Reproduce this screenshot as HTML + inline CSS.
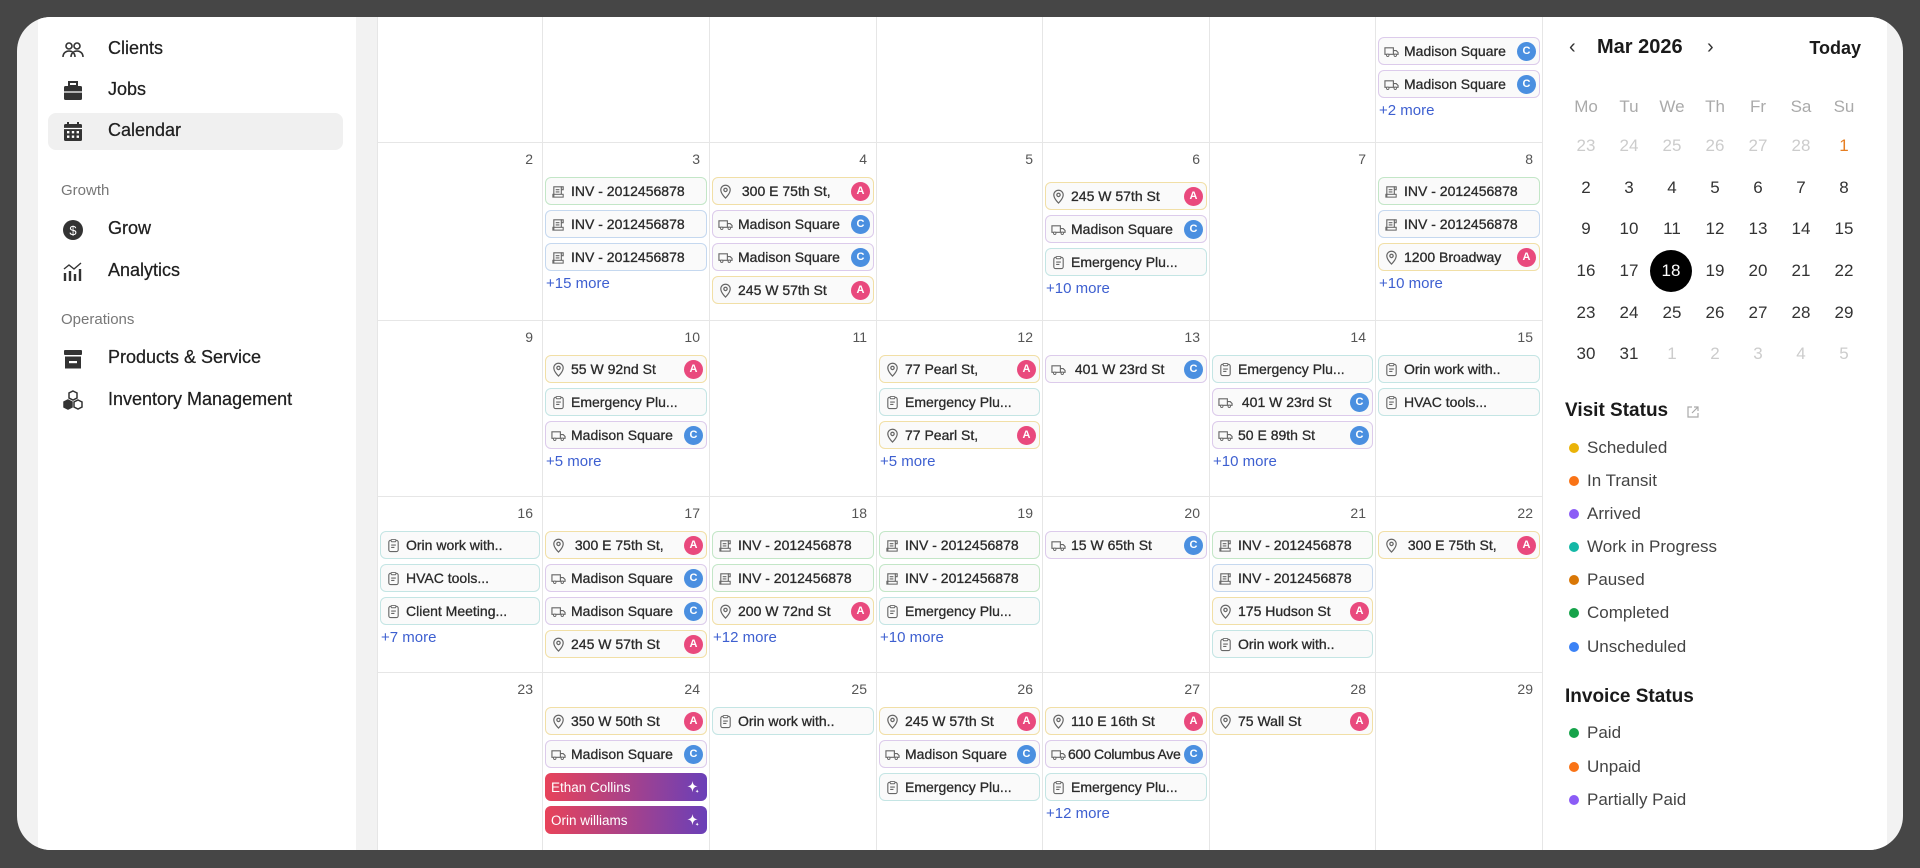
<!DOCTYPE html>
<html><head><meta charset="utf-8"><style>
*{margin:0;padding:0;box-sizing:border-box}
body{width:1920px;height:868px;background:#464646;position:relative;overflow:hidden;font-family:"Liberation Sans",sans-serif}
#pg{position:absolute;left:17px;top:17px;width:1886px;height:833px;background:#f2f2f2;border-radius:34px;overflow:hidden}
#sb{position:absolute;left:21px;top:0;width:318px;height:833px;background:#fff}
.si{position:absolute;left:70px;font-size:18px;color:#1f1f1f;-webkit-text-stroke:.25px #1f1f1f}
.sic{position:absolute;left:23px;width:24px;height:24px}
.sl{position:absolute;left:23px;font-size:15px;color:#777}
#cal{position:absolute;left:360px;top:0;width:1165px;height:833px;background:#fff;overflow:hidden}
.c{position:absolute;border-left:1px solid #e6e6e6;border-top:1px solid #e6e6e6;padding:34px 2px 0 2px}
.n{position:absolute;right:9px;top:8px;font-size:14px;color:#555}
.e{height:28px;margin-bottom:5px;border:1.5px solid;border-radius:6px;background:#fafafa;display:flex;align-items:center;padding:0 3px 0 5px;font-size:14px;color:#2a2a2a;white-space:nowrap;overflow:hidden;-webkit-text-stroke:.3px #2a2a2a}
.e svg{width:15px;height:15px;flex:none;margin-right:5px}
.b{margin-left:auto;width:19px;height:19px;border-radius:50%;color:#fff;font-size:11px;font-weight:bold;display:flex;align-items:center;justify-content:center;flex:none;-webkit-text-stroke:0}
.A{background:#e9497d}.C{background:#4a8fe0}
.y{border-color:#f1dfa6}.p{border-color:#dccbeb}.t{border-color:#c4e5e4}.g{border-color:#c3e6c7}.bl{border-color:#c5d8ef}
.m{font-size:15px;color:#3d5fd0;padding-left:1px;margin-top:-1px}
.gr{background:linear-gradient(90deg,#e8435a,#6a40b8);border:none;color:#fff;-webkit-text-stroke:0;font-size:13.5px;padding-left:6px}
#rp{position:absolute;left:1525px;top:0;width:345px;height:833px;background:#fff;border-left:1px solid #e6e6e6}
.wd{position:absolute;top:80px;width:40px;text-align:center;font-size:17px;color:#aaa}
.d{position:absolute;width:40px;text-align:center;font-size:17px;color:#333}
.d.o{color:#ccc}
.lg{position:absolute;left:44px;font-size:17px;color:#444}
.lg i{position:absolute;left:-18px;top:5px;width:10px;height:10px;border-radius:50%}
.h{position:absolute;left:22px;font-size:19px;font-weight:bold;color:#1a1a1a}
</style></head><body>
<svg width="0" height="0" style="position:absolute">
<defs>
<symbol id="pin" viewBox="0 0 16 16"><path d="M8 15s5-4.6 5-8.7A5 5 0 0 0 3 6.3C3 10.4 8 15 8 15z" fill="none" stroke="#666" stroke-width="1.3"/><circle cx="8" cy="6.3" r="1.8" fill="none" stroke="#666" stroke-width="1.3"/></symbol>
<symbol id="trk" viewBox="0 0 16 16"><path d="M1 4h9v7H1zM10 7h3l2 2v2h-5z" fill="none" stroke="#666" stroke-width="1.2"/><circle cx="4" cy="12" r="1.3" fill="#fff" stroke="#666"/><circle cx="12" cy="12" r="1.3" fill="#fff" stroke="#666"/></symbol>
<symbol id="clp" viewBox="0 0 16 16"><rect x="3" y="2.5" width="10" height="12" rx="2" fill="none" stroke="#666" stroke-width="1.2"/><rect x="5.5" y="1.5" width="5" height="2.5" rx="1" fill="#fff" stroke="#666"/><path d="M5.5 7.5h5M5.5 10h3.5" stroke="#666" stroke-width="1.2"/></symbol>
<symbol id="inv" viewBox="0 0 16 16"><path d="M3 14V3h8v8" fill="none" stroke="#666" stroke-width="1.2"/><path d="M11 3h2v3h-2M5 6h4M5 8.5h4" stroke="#666" stroke-width="1.2" fill="none"/><rect x="2" y="11" width="11" height="3" fill="none" stroke="#666" stroke-width="1.1"/></symbol>
<symbol id="spk" viewBox="0 0 16 16"><path d="M8 1c.6 3.8 1.6 5 5.5 5.8C9.6 7.6 8.6 8.8 8 13 7.4 8.8 6.4 7.6 2.5 6.8 6.4 6 7.4 4.8 8 1z" fill="#fff"/><path d="M13 10c.2 1.3.6 1.7 1.8 2-1.2.3-1.6.7-1.8 2-.2-1.3-.6-1.7-1.8-2 1.2-.3 1.6-.7 1.8-2z" fill="#fff"/></symbol>
</defs></svg>
<div id="pg">
<div id="sb">
<svg class="sic" style="top:21px" viewBox="0 0 24 24" fill="none" stroke="#333" stroke-width="1.6"><circle cx="8" cy="8" r="3"/><circle cx="16" cy="8" r="3"/><path d="M2 19c0-4 3-6 6-6s6 2 6 6M10 19c0-4 3-6 6-6s6 2 6 6"/></svg>
<div class="si" style="top:21px">Clients</div>
<svg class="sic" style="top:62px" viewBox="0 0 24 24"><rect x="3" y="7" width="18" height="14" rx="1.5" fill="#333"/><rect x="8" y="3" width="8" height="4" fill="none" stroke="#333" stroke-width="2"/><path d="M3 13h18" stroke="#fff" stroke-width="1.3"/></svg>
<div class="si" style="top:62px">Jobs</div>
<div style="position:absolute;left:10px;top:96px;width:295px;height:37px;background:#f0f0f0;border-radius:8px"></div>
<svg class="sic" style="top:103px" viewBox="0 0 24 24"><rect x="3" y="4" width="18" height="17" rx="1.5" fill="#333"/><path d="M7 2v4M17 2v4" stroke="#333" stroke-width="2"/><path d="M3 8.5h18" stroke="#fff" stroke-width="1.2"/><g fill="#fff"><rect x="6" y="11" width="2.4" height="2.4"/><rect x="10.8" y="11" width="2.4" height="2.4"/><rect x="15.6" y="11" width="2.4" height="2.4"/><rect x="6" y="15.5" width="2.4" height="2.4"/><rect x="10.8" y="15.5" width="2.4" height="2.4"/><rect x="15.6" y="15.5" width="2.4" height="2.4"/></g></svg>
<div class="si" style="top:103px">Calendar</div>
<div class="sl" style="top:165px">Growth</div>
<svg class="sic" style="top:201px" viewBox="0 0 24 24"><circle cx="12" cy="12" r="10" fill="#333"/><text x="12" y="17" font-size="13" fill="#fff" text-anchor="middle" font-family="Liberation Sans">$</text></svg>
<div class="si" style="top:201px">Grow</div>
<svg class="sic" style="top:243px" viewBox="0 0 24 24" stroke="#333" stroke-width="2.4"><path d="M4 21v-8M9 21v-10M14 21v-7M19 21v-12"/><path d="M3 9l5-4 5 4 7-6" stroke-width="1.4" fill="none"/></svg>
<div class="si" style="top:243px">Analytics</div>
<div class="sl" style="top:294px">Operations</div>
<svg class="sic" style="top:330px" viewBox="0 0 24 24"><rect x="3" y="3" width="18" height="5" rx="1" fill="#333"/><rect x="4" y="9.5" width="16" height="12" fill="#333"/><rect x="8" y="14" width="8" height="2.2" fill="#fff"/></svg>
<div class="si" style="top:330px">Products &amp; Service</div>
<svg class="sic" style="top:372px" viewBox="0 0 24 24" fill="none" stroke="#333" stroke-width="1.5"><path d="M12 2l4 2v5l-4 2-4-2V4z"/><path d="M7 11l4 2v5l-4 2-4-2v-5z" fill="#333"/><path d="M17 11l4 2v5l-4 2-4-2v-5z"/></svg>
<div class="si" style="top:372px">Inventory Management</div>
</div>

<div id="cal">
<div class="c" style="left:0;top:-20px;width:165px;height:145px"></div>
<div class="c" style="left:165px;top:-20px;width:167px;height:145px"></div>
<div class="c" style="left:332px;top:-20px;width:167px;height:145px"></div>
<div class="c" style="left:499px;top:-20px;width:166px;height:145px"></div>
<div class="c" style="left:665px;top:-20px;width:167px;height:145px"></div>
<div class="c" style="left:832px;top:-20px;width:166px;height:145px"></div>
<div class="c" style="left:998px;top:-20px;width:167px;height:145px;padding-top:39px">
<div class="e p"><svg><use href="#trk"/></svg>Madison Square<span class="b C">C</span></div>
<div class="e p"><svg><use href="#trk"/></svg>Madison Square<span class="b C">C</span></div>
<div class="m">+2 more</div></div>

<div class="c" style="left:0;top:125px;width:165px;height:178px"><div class="n">2</div></div>
<div class="c" style="left:165px;top:125px;width:167px;height:178px"><div class="n">3</div>
<div class="e g"><svg><use href="#inv"/></svg>INV - 2012456878</div>
<div class="e bl"><svg><use href="#inv"/></svg>INV - 2012456878</div>
<div class="e bl"><svg><use href="#inv"/></svg>INV - 2012456878</div>
<div class="m">+15 more</div></div>
<div class="c" style="left:332px;top:125px;width:167px;height:178px"><div class="n">4</div>
<div class="e y"><svg><use href="#pin"/></svg>&nbsp;300 E 75th St,<span class="b A">A</span></div>
<div class="e p"><svg><use href="#trk"/></svg>Madison Square<span class="b C">C</span></div>
<div class="e p"><svg><use href="#trk"/></svg>Madison Square<span class="b C">C</span></div>
<div class="e y"><svg><use href="#pin"/></svg>245 W 57th St<span class="b A">A</span></div></div>
<div class="c" style="left:499px;top:125px;width:166px;height:178px"><div class="n">5</div></div>
<div class="c" style="left:665px;top:125px;width:167px;height:178px;padding-top:39px"><div class="n">6</div>
<div class="e y"><svg><use href="#pin"/></svg>245 W 57th St<span class="b A">A</span></div>
<div class="e p"><svg><use href="#trk"/></svg>Madison Square<span class="b C">C</span></div>
<div class="e t"><svg><use href="#clp"/></svg>Emergency Plu...</div>
<div class="m">+10 more</div></div>
<div class="c" style="left:832px;top:125px;width:166px;height:178px"><div class="n">7</div></div>
<div class="c" style="left:998px;top:125px;width:167px;height:178px"><div class="n">8</div>
<div class="e g"><svg><use href="#inv"/></svg>INV - 2012456878</div>
<div class="e bl"><svg><use href="#inv"/></svg>INV - 2012456878</div>
<div class="e y"><svg><use href="#pin"/></svg>1200 Broadway<span class="b A">A</span></div>
<div class="m">+10 more</div></div>

<div class="c" style="left:0;top:303px;width:165px;height:176px"><div class="n">9</div></div>
<div class="c" style="left:165px;top:303px;width:167px;height:176px"><div class="n">10</div>
<div class="e y"><svg><use href="#pin"/></svg>55 W 92nd St<span class="b A">A</span></div>
<div class="e t"><svg><use href="#clp"/></svg>Emergency Plu...</div>
<div class="e p"><svg><use href="#trk"/></svg>Madison Square<span class="b C">C</span></div>
<div class="m">+5 more</div></div>
<div class="c" style="left:332px;top:303px;width:167px;height:176px"><div class="n">11</div></div>
<div class="c" style="left:499px;top:303px;width:166px;height:176px"><div class="n">12</div>
<div class="e y"><svg><use href="#pin"/></svg>77 Pearl St,<span class="b A">A</span></div>
<div class="e t"><svg><use href="#clp"/></svg>Emergency Plu...</div>
<div class="e y"><svg><use href="#pin"/></svg>77 Pearl St,<span class="b A">A</span></div>
<div class="m">+5 more</div></div>
<div class="c" style="left:665px;top:303px;width:167px;height:176px"><div class="n">13</div>
<div class="e p"><svg><use href="#trk"/></svg>&nbsp;401 W 23rd St<span class="b C">C</span></div></div>
<div class="c" style="left:832px;top:303px;width:166px;height:176px"><div class="n">14</div>
<div class="e t"><svg><use href="#clp"/></svg>Emergency Plu...</div>
<div class="e p"><svg><use href="#trk"/></svg>&nbsp;401 W 23rd St<span class="b C">C</span></div>
<div class="e p"><svg><use href="#trk"/></svg>50 E 89th St<span class="b C">C</span></div>
<div class="m">+10 more</div></div>
<div class="c" style="left:998px;top:303px;width:167px;height:176px"><div class="n">15</div>
<div class="e t"><svg><use href="#clp"/></svg>Orin work with..</div>
<div class="e t"><svg><use href="#clp"/></svg>HVAC tools...</div></div>

<div class="c" style="left:0;top:479px;width:165px;height:176px"><div class="n">16</div>
<div class="e t"><svg><use href="#clp"/></svg>Orin work with..</div>
<div class="e t"><svg><use href="#clp"/></svg>HVAC tools...</div>
<div class="e t"><svg><use href="#clp"/></svg>Client Meeting...</div>
<div class="m">+7 more</div></div>
<div class="c" style="left:165px;top:479px;width:167px;height:176px"><div class="n">17</div>
<div class="e y"><svg><use href="#pin"/></svg>&nbsp;300 E 75th St,<span class="b A">A</span></div>
<div class="e p"><svg><use href="#trk"/></svg>Madison Square<span class="b C">C</span></div>
<div class="e p"><svg><use href="#trk"/></svg>Madison Square<span class="b C">C</span></div>
<div class="e y"><svg><use href="#pin"/></svg>245 W 57th St<span class="b A">A</span></div></div>
<div class="c" style="left:332px;top:479px;width:167px;height:176px"><div class="n">18</div>
<div class="e g"><svg><use href="#inv"/></svg>INV - 2012456878</div>
<div class="e g"><svg><use href="#inv"/></svg>INV - 2012456878</div>
<div class="e y"><svg><use href="#pin"/></svg>200 W 72nd St<span class="b A">A</span></div>
<div class="m">+12 more</div></div>
<div class="c" style="left:499px;top:479px;width:166px;height:176px"><div class="n">19</div>
<div class="e g"><svg><use href="#inv"/></svg>INV - 2012456878</div>
<div class="e g"><svg><use href="#inv"/></svg>INV - 2012456878</div>
<div class="e t"><svg><use href="#clp"/></svg>Emergency Plu...</div>
<div class="m">+10 more</div></div>
<div class="c" style="left:665px;top:479px;width:167px;height:176px"><div class="n">20</div>
<div class="e p"><svg><use href="#trk"/></svg>15 W 65th St<span class="b C">C</span></div></div>
<div class="c" style="left:832px;top:479px;width:166px;height:176px"><div class="n">21</div>
<div class="e g"><svg><use href="#inv"/></svg>INV - 2012456878</div>
<div class="e bl"><svg><use href="#inv"/></svg>INV - 2012456878</div>
<div class="e y"><svg><use href="#pin"/></svg>175 Hudson St<span class="b A">A</span></div>
<div class="e t"><svg><use href="#clp"/></svg>Orin work with..</div></div>
<div class="c" style="left:998px;top:479px;width:167px;height:176px"><div class="n">22</div>
<div class="e y"><svg><use href="#pin"/></svg>&nbsp;300 E 75th St,<span class="b A">A</span></div></div>

<div class="c" style="left:0;top:655px;width:165px;height:180px"><div class="n">23</div></div>
<div class="c" style="left:165px;top:655px;width:167px;height:180px"><div class="n">24</div>
<div class="e y"><svg><use href="#pin"/></svg>350 W 50th St<span class="b A">A</span></div>
<div class="e p"><svg><use href="#trk"/></svg>Madison Square<span class="b C">C</span></div>
<div class="e gr">Ethan Collins<svg style="margin-left:auto;margin-right:4px"><use href="#spk"/></svg></div>
<div class="e gr">Orin williams<svg style="margin-left:auto;margin-right:4px"><use href="#spk"/></svg></div></div>
<div class="c" style="left:332px;top:655px;width:167px;height:180px"><div class="n">25</div>
<div class="e t"><svg><use href="#clp"/></svg>Orin work with..</div></div>
<div class="c" style="left:499px;top:655px;width:166px;height:180px"><div class="n">26</div>
<div class="e y"><svg><use href="#pin"/></svg>245 W 57th St<span class="b A">A</span></div>
<div class="e p"><svg><use href="#trk"/></svg>Madison Square<span class="b C">C</span></div>
<div class="e t"><svg><use href="#clp"/></svg>Emergency Plu...</div></div>
<div class="c" style="left:665px;top:655px;width:167px;height:180px"><div class="n">27</div>
<div class="e y"><svg><use href="#pin"/></svg>110 E 16th St<span class="b A">A</span></div>
<div class="e p" style="letter-spacing:-.3px"><svg style="margin-right:2px"><use href="#trk"/></svg>600 Columbus Ave<span class="b C">C</span></div>
<div class="e t"><svg><use href="#clp"/></svg>Emergency Plu...</div>
<div class="m">+12 more</div></div>
<div class="c" style="left:832px;top:655px;width:166px;height:180px"><div class="n">28</div>
<div class="e y"><svg><use href="#pin"/></svg>75 Wall St<span class="b A">A</span></div></div>
<div class="c" style="left:998px;top:655px;width:167px;height:180px"><div class="n">29</div></div>
</div>

<div id="rp">
<div style="position:absolute;left:26px;top:19px;font-size:20px;color:#333">&#8249;</div>
<div style="position:absolute;left:54px;top:19px;font-size:20px;font-weight:bold;color:#1a1a1a">Mar 2026</div>
<div style="position:absolute;left:164px;top:19px;font-size:20px;color:#333">&#8250;</div>
<div style="position:absolute;right:26px;top:21px;font-size:18px;font-weight:bold;color:#1a1a1a">Today</div>
<div class="wd" style="left:23px">Mo</div><div class="wd" style="left:66px">Tu</div><div class="wd" style="left:109px">We</div><div class="wd" style="left:152px">Th</div><div class="wd" style="left:195px">Fr</div><div class="wd" style="left:238px">Sa</div><div class="wd" style="left:281px">Su</div>
<div style="position:absolute;top:119px;left:0">
<div class="d o" style="left:23px">23</div><div class="d o" style="left:66px">24</div><div class="d o" style="left:109px">25</div><div class="d o" style="left:152px">26</div><div class="d o" style="left:195px">27</div><div class="d o" style="left:238px">28</div><div class="d" style="left:281px;color:#e67e22">1</div>
</div>
<div style="position:absolute;top:161px;left:0">
<div class="d" style="left:23px">2</div><div class="d" style="left:66px">3</div><div class="d" style="left:109px">4</div><div class="d" style="left:152px">5</div><div class="d" style="left:195px">6</div><div class="d" style="left:238px">7</div><div class="d" style="left:281px">8</div>
</div>
<div style="position:absolute;top:202px;left:0">
<div class="d" style="left:23px">9</div><div class="d" style="left:66px">10</div><div class="d" style="left:109px">11</div><div class="d" style="left:152px">12</div><div class="d" style="left:195px">13</div><div class="d" style="left:238px">14</div><div class="d" style="left:281px">15</div>
</div>
<div style="position:absolute;left:107px;top:233px;width:42px;height:42px;border-radius:50%;background:#000"></div>
<div style="position:absolute;top:244px;left:0">
<div class="d" style="left:23px">16</div><div class="d" style="left:66px">17</div><div class="d" style="left:108px;color:#fff">18</div><div class="d" style="left:152px">19</div><div class="d" style="left:195px">20</div><div class="d" style="left:238px">21</div><div class="d" style="left:281px">22</div>
</div>
<div style="position:absolute;top:286px;left:0">
<div class="d" style="left:23px">23</div><div class="d" style="left:66px">24</div><div class="d" style="left:109px">25</div><div class="d" style="left:152px">26</div><div class="d" style="left:195px">27</div><div class="d" style="left:238px">28</div><div class="d" style="left:281px">29</div>
</div>
<div style="position:absolute;top:327px;left:0">
<div class="d" style="left:23px">30</div><div class="d" style="left:66px">31</div><div class="d o" style="left:109px">1</div><div class="d o" style="left:152px">2</div><div class="d o" style="left:195px">3</div><div class="d o" style="left:238px">4</div><div class="d o" style="left:281px">5</div>
</div>
<div class="h" style="top:383px">Visit Status</div>
<svg style="position:absolute;left:143px;top:388px" width="14" height="14" viewBox="0 0 14 14" fill="none" stroke="#aaa" stroke-width="1.2"><path d="M6 2H2v10h10V8M8 2h4v4M12 2L6 8"/></svg>
<div class="lg" style="top:421px"><i style="background:#eab308"></i>Scheduled</div>
<div class="lg" style="top:454px"><i style="background:#f97316"></i>In Transit</div>
<div class="lg" style="top:487px"><i style="background:#8b5cf6"></i>Arrived</div>
<div class="lg" style="top:520px"><i style="background:#14b8a6"></i>Work in Progress</div>
<div class="lg" style="top:553px"><i style="background:#d97706"></i>Paused</div>
<div class="lg" style="top:586px"><i style="background:#16a34a"></i>Completed</div>
<div class="lg" style="top:620px"><i style="background:#3b82f6"></i>Unscheduled</div>
<div class="h" style="top:669px">Invoice Status</div>
<div class="lg" style="top:706px"><i style="background:#16a34a"></i>Paid</div>
<div class="lg" style="top:740px"><i style="background:#f97316"></i>Unpaid</div>
<div class="lg" style="top:773px"><i style="background:#8b5cf6"></i>Partially Paid</div>
</div>
</div>
</body></html>
